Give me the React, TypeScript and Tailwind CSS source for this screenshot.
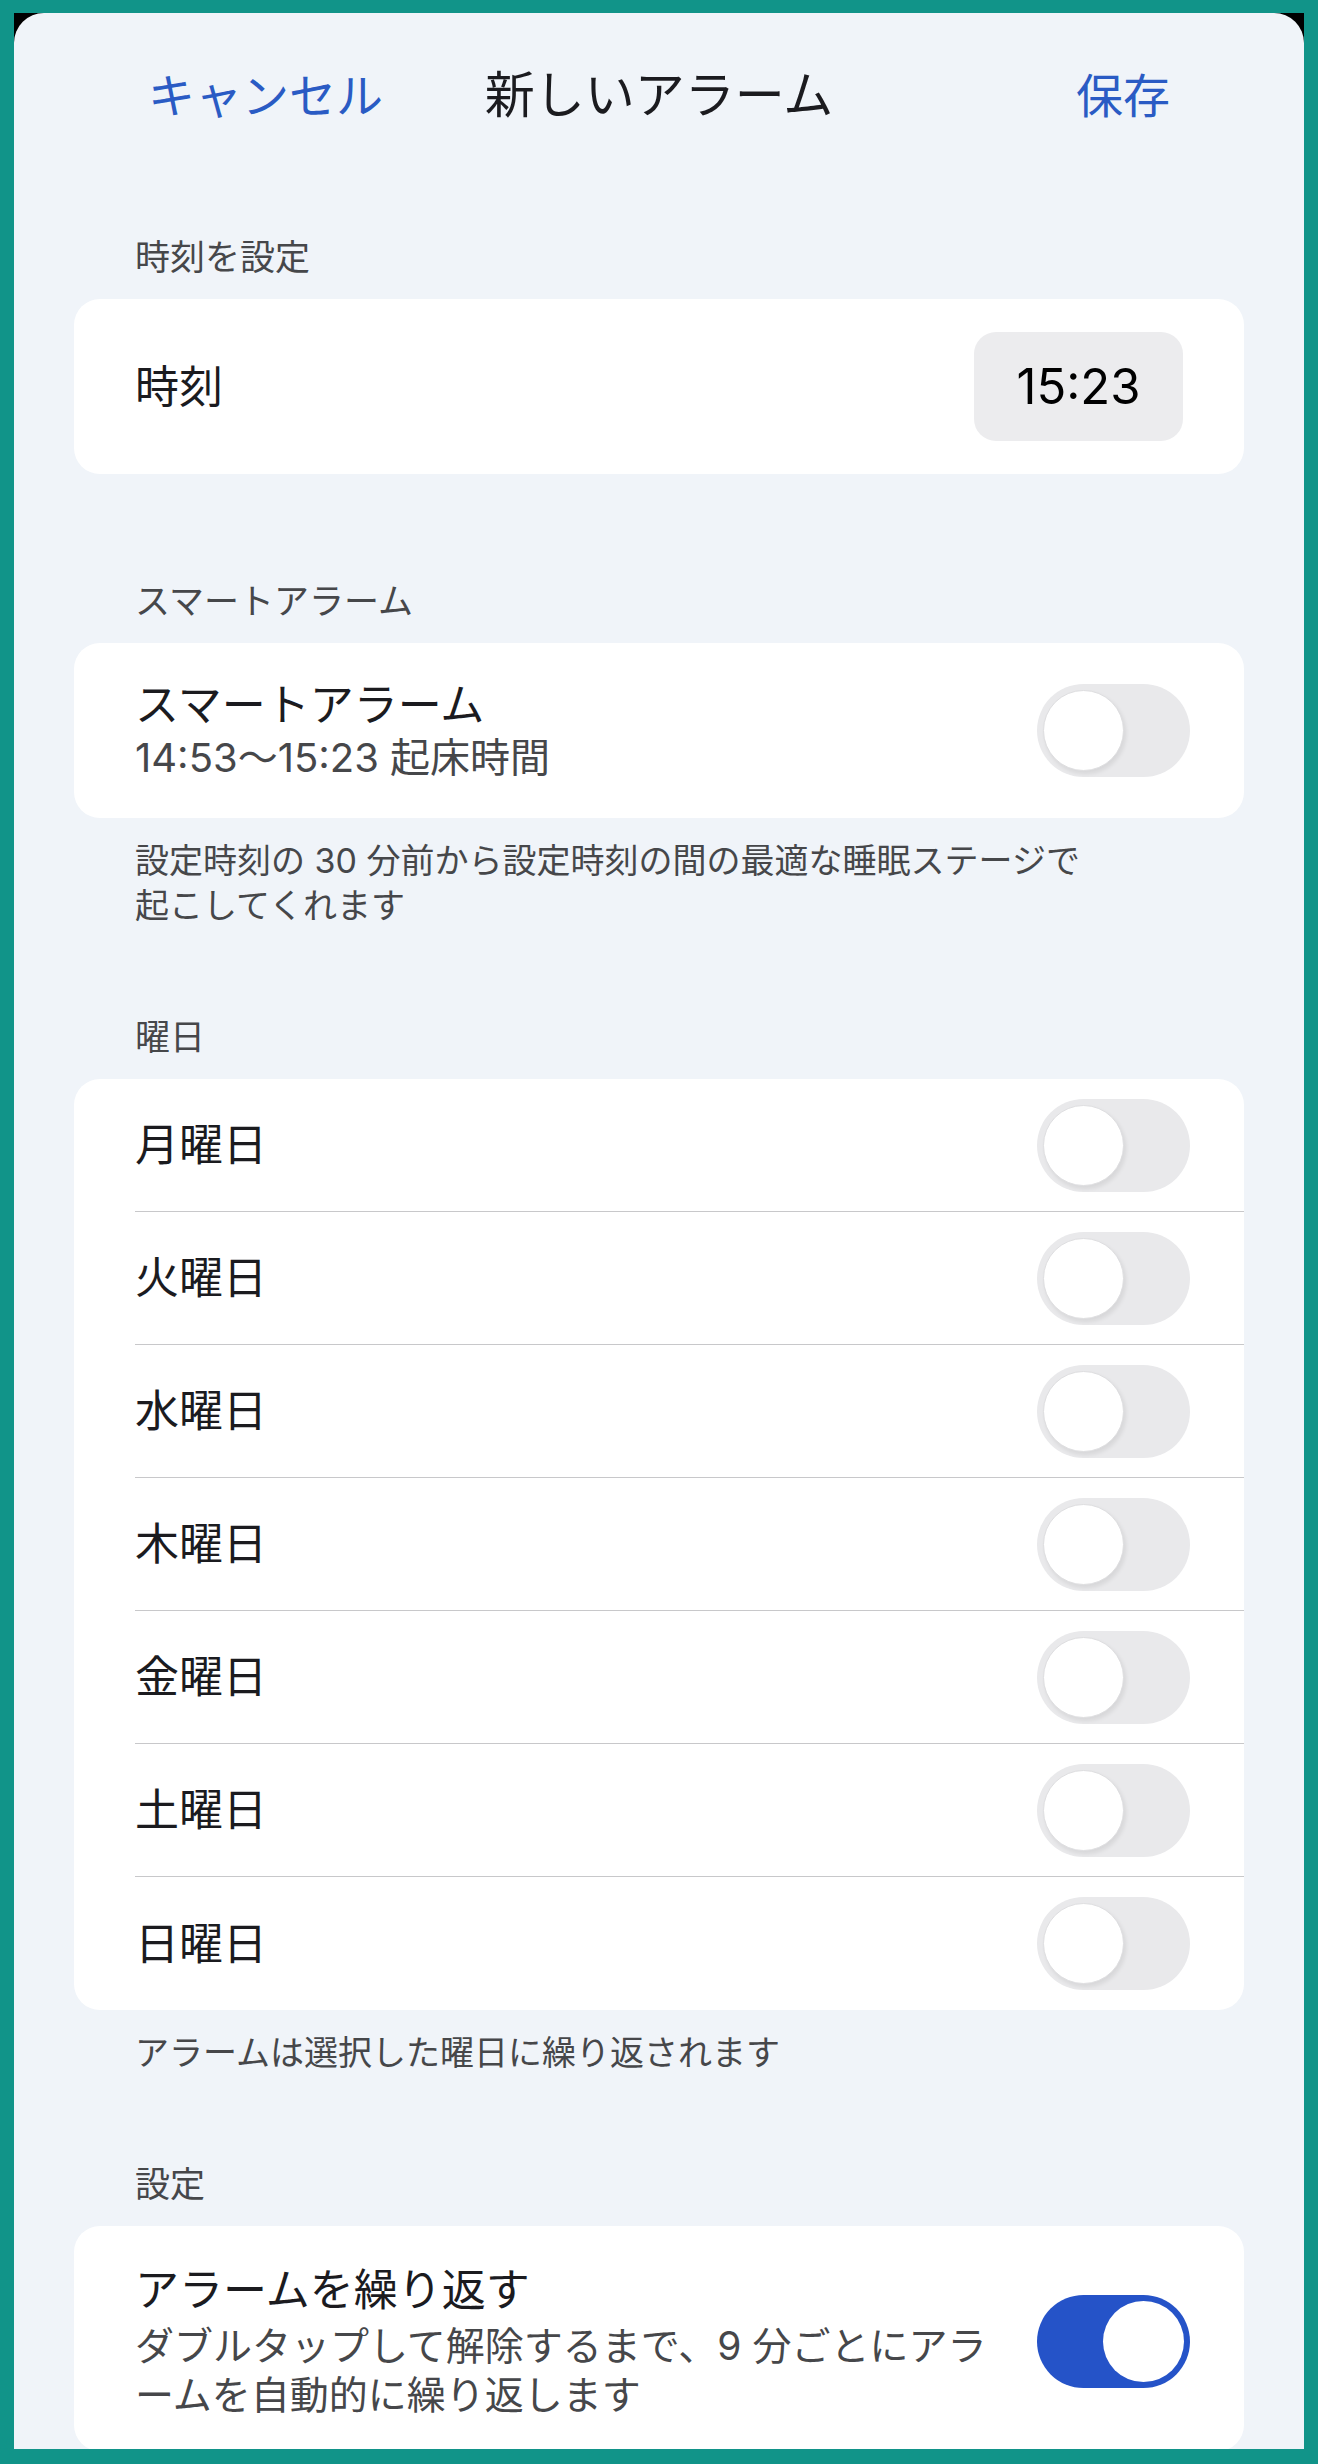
import React from 'react';

const days = ['月曜日', '火曜日', '水曜日', '木曜日', '金曜日', '土曜日', '日曜日'];

function Toggle({ on = false }: { on?: boolean }) {
  return (
    <div
      className={`flex w-[153px] h-[93px] shrink-0 rounded-full p-[6px] ${
        on ? 'bg-[#2553C8] justify-end' : 'bg-[#E9E9EB] justify-start'
      }`}
    >
      <div
        className={`w-[81px] h-[81px] rounded-full bg-white ${
          on ? '' : 'border border-[#DEDEE0] shadow-[2px_3px_4px_rgba(0,0,0,0.08)]'
        }`}
      />
    </div>
  );
}

function SectionLabel({ children }: { children: React.ReactNode }) {
  return (
    <div className="px-[121px] pb-[18px] text-[35px] leading-[48px] text-[#46474A]">
      {children}
    </div>
  );
}

function Footnote({ children }: { children: React.ReactNode }) {
  return (
    <div className="px-[121px] pt-[20px] text-[34px] leading-[45px] text-[#46474A]">
      {children}
    </div>
  );
}

export default function App() {
  return (
    <div className="w-[1318px] h-[2464px] bg-[#119489] pt-[13px] px-[14px] pb-[15px] font-['Inter','Noto_Sans_CJK_JP',sans-serif] overflow-hidden">
      <div className="h-full bg-black">
        <div className="h-full bg-[#F0F4F9] rounded-t-[30px] overflow-hidden">
          {/* Header */}
          <div className="grid grid-cols-[1fr_auto_1fr] items-center h-[164px] px-[134px]">
            <div className="text-[47px] text-[#2A5BC4] leading-none">キャンセル</div>
            <div className="text-[50px] text-[#1B1B1F] leading-none">新しいアラーム</div>
            <div className="text-[47px] text-[#2A5BC4] leading-none justify-self-end">保存</div>
          </div>

          {/* 時刻を設定 */}
          <div className="mt-[56px]">
            <SectionLabel>時刻を設定</SectionLabel>
            <div className="mx-[60px] h-[175px] bg-white rounded-[26px] flex items-center justify-between pl-[61px] pr-[61px]">
              <div className="text-[44px] text-[#1B1B1F]">時刻</div>
              <div className="w-[209px] h-[109px] rounded-[22px] bg-[#ECECEE] flex items-center justify-center text-[49px] text-black">
                15:23
              </div>
            </div>
          </div>

          {/* スマートアラーム */}
          <div className="mt-[103px]">
            <SectionLabel>スマートアラーム</SectionLabel>
            <div className="mx-[60px] h-[175px] bg-white rounded-[26px] flex items-center justify-between pl-[61px] pr-[54px]">
              <div>
                <div className="text-[44px] leading-[52px] text-[#1B1B1F]">スマートアラーム</div>
                <div className="text-[40px] leading-[48px] text-[#46474A] mt-[3px]">14:53～15:23 起床時間</div>
              </div>
              <Toggle />
            </div>
            <Footnote>
              設定時刻の 30 分前から設定時刻の間の最適な睡眠ステージで
              <br />
              起こしてくれます
            </Footnote>
          </div>

          {/* 曜日 */}
          <div className="mt-[85px]">
            <SectionLabel>曜日</SectionLabel>
            <div className="mx-[60px] bg-white rounded-[26px] overflow-hidden">
              {days.map((d, i) => (
                <div key={d} className="pl-[61px] h-[133px]">
                  <div
                    className={`h-full flex items-center justify-between pr-[54px] ${
                      i < days.length - 1 ? 'border-b border-[#C8C8CA]' : ''
                    }`}
                  >
                    <div className="text-[44px] text-[#1B1B1F]">{d}</div>
                    <Toggle />
                  </div>
                </div>
              ))}
            </div>
            <Footnote>アラームは選択した曜日に繰り返されます</Footnote>
          </div>

          {/* 設定 */}
          <div className="mt-[85px]">
            <SectionLabel>設定</SectionLabel>
            <div className="mx-[60px] bg-white rounded-[26px] flex items-center justify-between pl-[61px] pr-[54px] pt-[38px] pb-[32px]">
              <div>
                <div className="text-[44px] leading-[52px] text-[#1B1B1F]">アラームを繰り返す</div>
                <div className="text-[39px] leading-[49px] text-[#46474A] mt-[5px]">
                  ダブルタップして解除するまで、9 分ごとにアラ
                  <br />
                  ームを自動的に繰り返します
                </div>
              </div>
              <Toggle on />
            </div>
          </div>
        </div>
      </div>
    </div>
  );
}
